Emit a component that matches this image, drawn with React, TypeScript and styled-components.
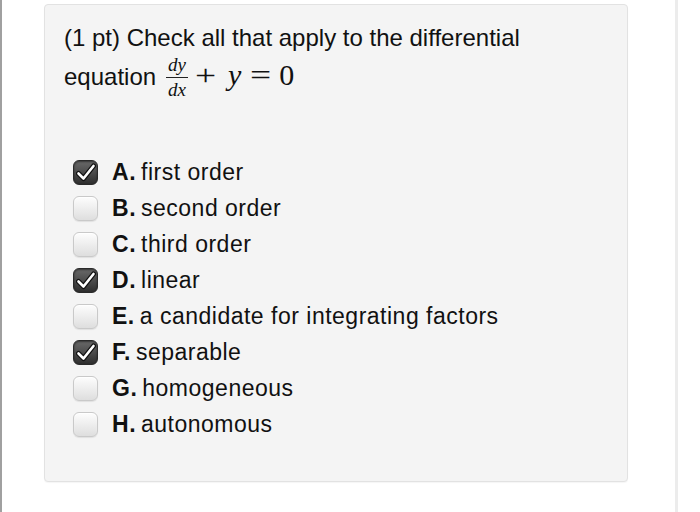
import React from "react";
import styled, { createGlobalStyle } from "styled-components";

const GlobalStyle = createGlobalStyle`
  html, body {
    margin: 0;
    padding: 0;
    background: #ffffff;
  }
  body {
    font-family: "Liberation Sans", Arial, sans-serif;
    color: #111;
  }
`;

const Page = styled.div`
  box-sizing: border-box;
  width: 678px;
  height: 512px;
  border-left: 2px solid #a0a0a0;
  border-right: 3px solid #ececec;
  padding: 4px 0 0 42px;
`;

const Card = styled.div`
  box-sizing: border-box;
  width: 584px;
  height: 478px;
  background: #f4f4f4;
  border: 1px solid #e2e2e2;
  border-radius: 4px;
  box-shadow: 0 1px 1px rgba(0, 0, 0, 0.04);
  padding: 14px 20px 0 19px;
`;

const Question = styled.div`
  font-size: 24px;
  line-height: 37px;
  color: #111;
`;

const Math = styled.span`
  font-family: "Liberation Serif", "Times New Roman", serif;
  font-size: 30px;
  margin-left: 10px;
`;

const Frac = styled.span`
  display: inline-flex;
  flex-direction: column;
  align-items: center;
  vertical-align: middle;
  font-style: italic;
  font-size: 19px;
  line-height: 18px;
  margin: 0 7px 0 0;
  position: relative;
  top: -1px;
`;

const Num = styled.span`
  padding: 0 2px 3px;
  border-bottom: 1px solid #222;
`;

const Den = styled.span`
  padding: 3px 2px 0;
`;

const Op = styled.span<{ $left?: number; $right?: number }>`
  display: inline-block;
  transform: scaleX(1.25);
  margin-left: ${(p) => p.$left ?? 0}px;
  margin-right: ${(p) => p.$right ?? 0}px;
`;

const Var = styled.i`
  margin-right: 6px;
`;

const Options = styled.div`
  display: flex;
  flex-direction: column;
  gap: 12px;
  margin-top: 61px;
  padding-left: 9px;
`;

const Row = styled.label`
  display: flex;
  align-items: center;
  gap: 14px;
  height: 24px;
  font-size: 23px;
  letter-spacing: 0.5px;
  color: #111;
`;

const Box = styled.span<{ $checked?: boolean }>`
  box-sizing: border-box;
  flex: none;
  width: 25px;
  height: 25px;
  border-radius: 6px;
  display: flex;
  align-items: center;
  justify-content: center;
  border: 1px solid ${(p) => (p.$checked ? "#2a2a2a" : "#c9c9c9")};
  background: ${(p) =>
    p.$checked
      ? "linear-gradient(#6a6a6a, #2e2e2e)"
      : "linear-gradient(#fdfdfd, #dedede)"};
  box-shadow: ${(p) =>
    p.$checked
      ? "inset 0 1px 2px rgba(0,0,0,0.5)"
      : "inset 0 1px 1px rgba(255,255,255,0.9), 0 1px 1px rgba(0,0,0,0.08)"};
`;

const Letter = styled.b`
  font-weight: bold;
  margin-right: 5px;
`;

const Check = () => (
  <svg width="20" height="19" viewBox="0 0 20 19">
    <path
      d="M2.5 10.5 L7.5 15.5 L17.5 3"
      fill="none"
      stroke="#111"
      strokeWidth="5"
      strokeLinecap="round"
      strokeLinejoin="round"
    />
    <path
      d="M2.5 10.5 L7.5 15.5 L17.5 3"
      fill="none"
      stroke="#fff"
      strokeWidth="2.6"
      strokeLinecap="round"
      strokeLinejoin="round"
    />
  </svg>
);

const options = [
  { key: "A", text: "first order", checked: true },
  { key: "B", text: "second order", checked: false },
  { key: "C", text: "third order", checked: false },
  { key: "D", text: "linear", checked: true },
  { key: "E", text: "a candidate for integrating factors", checked: false },
  { key: "F", text: "separable", checked: true },
  { key: "G", text: "homogeneous", checked: false },
  { key: "H", text: "autonomous", checked: false },
];

export default function App() {
  return (
    <>
      <GlobalStyle />
      <Page>
        <Card>
          <Question>
            (1 pt) Check all that apply to the differential
            <br />
            equation
            <Math>
              <Frac>
                <Num>dy</Num>
                <Den>dx</Den>
              </Frac>
              <Op $left={2} $right={14}>+</Op>
              <Var>y</Var>
              <Op $left={5} $right={10}>=</Op>
              <span>0</span>
            </Math>
          </Question>
          <Options>
            {options.map((o) => (
              <Row key={o.key}>
                <Box $checked={o.checked}>{o.checked && <Check />}</Box>
                <span>
                  <Letter>{o.key}.</Letter>
                  {o.text}
                </span>
              </Row>
            ))}
          </Options>
        </Card>
      </Page>
    </>
  );
}
